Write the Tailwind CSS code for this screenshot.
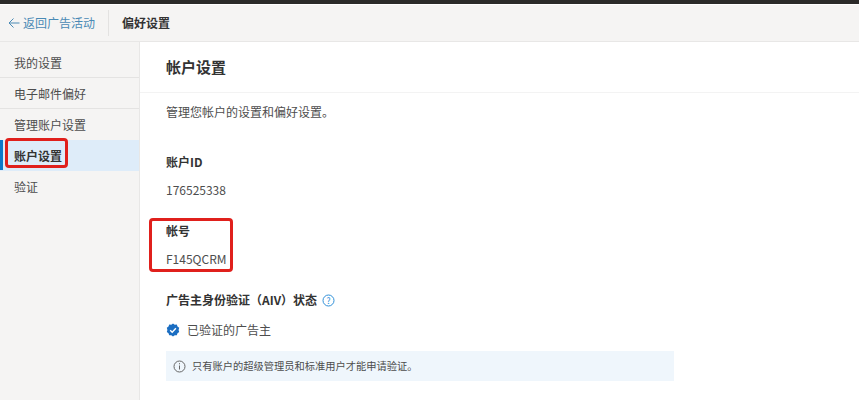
<!DOCTYPE html>
<html lang="zh-CN">
<head>
  <meta charset="UTF-8" />
  <title>偏好设置</title>
  <script src="https://cdn.jsdelivr.net/npm/@tailwindcss/browser@4"></script>
</head>
<body class="h-[400px] overflow-hidden bg-white font-['Noto_Sans_CJK_SC','Noto_Sans',sans-serif] text-[12px] text-[#4d4d4d]">
  <!-- top bar -->
  <div class="h-[4px] bg-[#2b2a29]"></div>
  <div class="h-[37px] mt-px flex items-center bg-[#f5f4f3] border-b border-[#e8e7e6]">
    <a class="w-[108px] pl-[8px] flex items-center gap-[3px] text-[#4a8ab5] text-[12px]">
      <svg class="w-[12px] h-[12px]" viewBox="0 0 12 12" fill="none" stroke="#4a8ab5" stroke-width="1"><path d="M11.5 6H1M5.5 1.5 1 6l4.5 4.5"/></svg>
      返回广告活动
    </a>
    <div class="w-px h-[26px] bg-[#e3e2e1]"></div>
    <div class="pl-[13px] font-bold text-[#333]">偏好设置</div>
  </div>

  <div class="flex h-[358px]">
    <!-- sidebar -->
    <nav class="relative w-[140px] pt-[5px] bg-[#f5f4f3] border-r border-[#e8e7e6]">
      <div class="h-[31px] pt-[2px] pl-[14px] flex items-center border-b border-[#e4e3e2]">我的设置</div>
      <div class="h-[31px] pt-[2px] pl-[14px] flex items-center border-b border-[#e4e3e2]">电子邮件偏好</div>
      <div class="h-[31px] pl-[14px] flex items-center">管理账户设置</div>
      <div class="relative h-[31px] pl-[14px] flex items-center bg-[#deecf9] font-bold text-[#333]">
        <span class="absolute left-0 top-0 w-[3px] h-[30px] bg-[#0f78c9]"></span>
        账户设置
        <span class="absolute left-[5px] top-[-2px] w-[63px] h-[30px] border-[3px] border-[#e0201c] rounded-[4px]"></span>
      </div>
      <div class="h-[31px] pl-[14px] flex items-center">验证</div>
    </nav>

    <!-- main -->
    <main class="relative flex-1">
      <h1 class="h-[51px] pl-[26px] flex items-center text-[15px] font-bold text-[#333] border-b border-[#f3f3f3]">帐户设置</h1>
      <p class="pl-[26px] mt-[9px] leading-[20px]">管理您帐户的设置和偏好设置。</p>
      <div class="pl-[26px] mt-[30px] leading-[20px] font-bold text-[#333]">账户ID</div>
      <div class="pl-[26px] mt-[8px] leading-[20px]">176525338</div>
      <div class="pl-[26px] mt-[21px] leading-[20px] font-bold text-[#333]">帐号</div>
      <div class="pl-[26px] mt-[8px] leading-[20px]">F145QCRM</div>
      <div class="pl-[26px] mt-[21px] leading-[20px] font-bold text-[#333] flex items-center gap-[5px]">
        广告主身份验证（AIV）状态
        <svg class="w-[13px] h-[13px]" viewBox="0 0 13 13" fill="none"><circle cx="6.5" cy="6.5" r="5.5" stroke="#2f8fd8"/><text x="6.5" y="9.5" text-anchor="middle" font-size="8.5" font-weight="400" fill="#2f8fd8">?</text></svg>
      </div>
      <div class="pl-[26px] mt-[10px] leading-[20px] flex items-center gap-[7px]">
        <svg class="w-[14px] h-[14px]" viewBox="0 0 14 14"><path fill="#1b6ec2" d="M7 .5l1.7 1.2 2.1-.1.7 2 1.7 1.2-.6 2.2.6 2-1.7 1.3-.7 2-2.1-.1L7 13.5l-1.7-1.3-2.1.1-.7-2L.8 9l.6-2-.6-2.2 1.7-1.2.7-2 2.1.1z"/><path fill="none" stroke="#fff" stroke-width="1.4" d="M4.2 7.2 6.2 9.2 9.9 5.2"/></svg>
        已验证的广告主
      </div>
      <div class="ml-[26px] mt-[11px] w-[508px] h-[30px] flex items-center gap-[6px] pl-[7px] bg-[#eff6fc] text-[10.25px]">
        <svg class="w-[13px] h-[13px]" viewBox="0 0 13 13" fill="none" stroke="#666"><circle cx="6.5" cy="6.5" r="5.5"/><path d="M6.5 5.5v4M6.5 3.2v1.1"/></svg>
        只有账户的超级管理员和标准用户才能申请验证。
      </div>
      <span class="absolute left-[9px] top-[176px] w-[84px] h-[54px] border-[3px] border-[#e0201c] rounded-[4px]"></span>
    </main>
  </div>
</body>
</html>
